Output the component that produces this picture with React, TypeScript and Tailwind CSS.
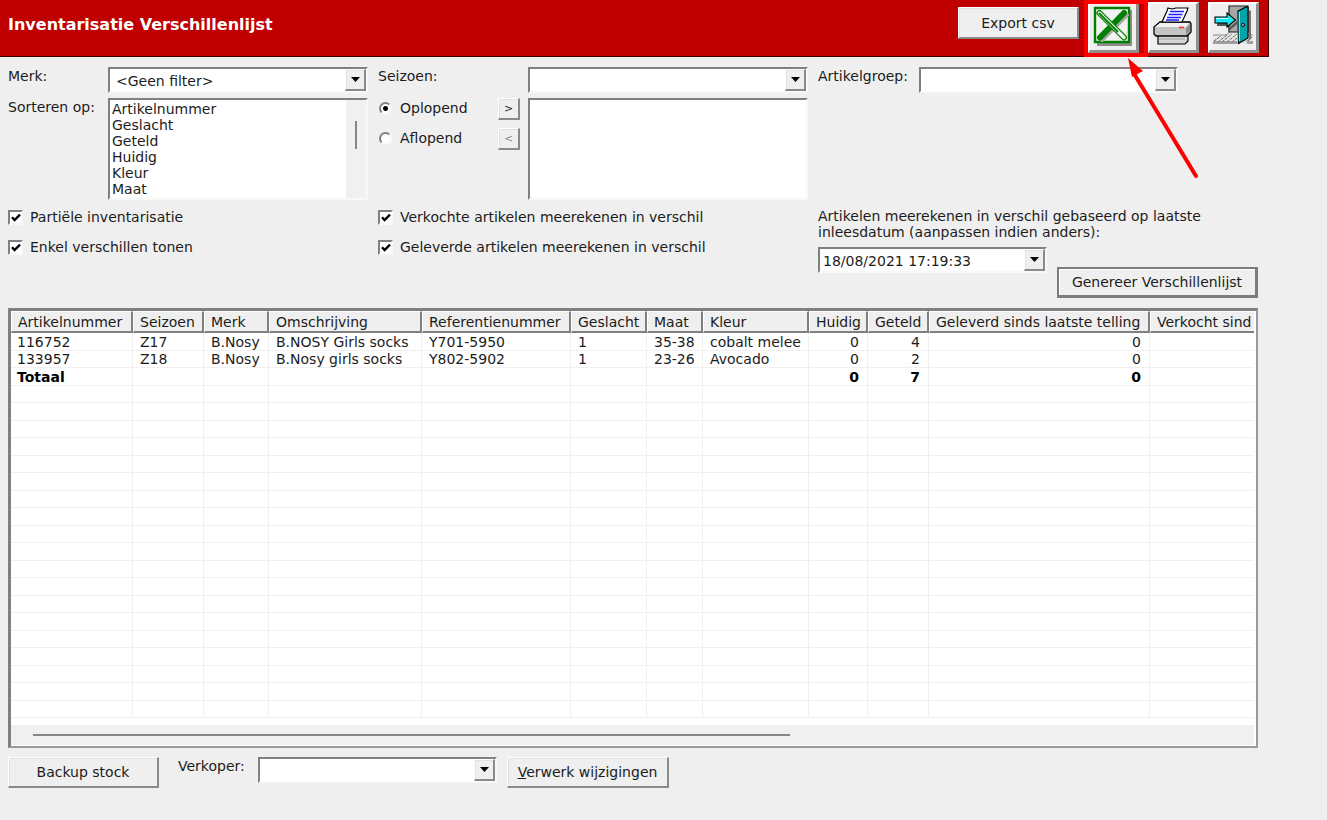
import React from "react";

const RAISED =
  "border-t border-l border-r-2 border-b-2 border-t-white border-l-white border-r-[#8a8a8a] border-b-[#8a8a8a] bg-[#efefef] shadow-[inset_1px_1px_0_#e2e2e2]";
const SUNKEN =
  "border-t-2 border-l-2 border-r-2 border-b-2 border-t-[#808080] border-l-[#808080] border-r-[#f8f8f8] border-b-[#f8f8f8] bg-white";

type DropDownProps = { id: string; options: string[]; className?: string; inset?: string };

function DropDown({ id, options, className = "", inset = "pl-1.5" }: DropDownProps) {
  return (
    <div className={`relative h-[26px] ${SUNKEN} ${className}`}>
      <select id={id} className={`block h-full w-full appearance-none bg-transparent pt-px pr-6 outline-none ${inset}`}>
        {options.map((o) => (
          <option key={o}>{o}</option>
        ))}
      </select>
      <span
        className={`pointer-events-none absolute top-0 right-0 flex h-[22px] w-[21px] items-center justify-center ${RAISED}`}
      >
        <svg width="9" height="5" viewBox="0 0 9 5" aria-hidden="true">
          <path d="M0 0h9L4.5 5z" fill="#000" />
        </svg>
      </span>
    </div>
  );
}

function Check({ label }: { label: string }) {
  return (
    <label className="flex h-[30px] items-center gap-[7px]">
      <span className="relative h-[15px] w-[15px]">
        <input type="checkbox" defaultChecked className={`peer block h-[15px] w-[15px] appearance-none ${SUNKEN}`} />
        <svg
          className="pointer-events-none absolute top-[3px] left-[3px] hidden peer-checked:block"
          width="10"
          height="10"
          viewBox="0 0 10 10"
          aria-hidden="true"
        >
          <path d="M1 4.2 3.6 7 9 1.6" fill="none" stroke="#000" strokeWidth="2.4" />
        </svg>
      </span>
      {label}
    </label>
  );
}

function Radio({ label, checked }: { label: string; checked?: boolean }) {
  return (
    <label className="flex h-5 items-center gap-2 pl-px">
      <input
        type="radio"
        name="richting"
        defaultChecked={checked}
        className="block h-[13px] w-[13px] appearance-none rounded-full border-2 border-t-[#808080] border-r-[#f8f8f8] border-b-[#f8f8f8] border-l-[#808080] bg-white checked:bg-[radial-gradient(circle,#000_2px,#fff_3px)]"
      />
      {label}
    </label>
  );
}

function ExcelIcon() {
  return (
    <svg width="44" height="44" viewBox="0 0 44 44" aria-hidden="true">
      <path d="M6 5h35v36H6z" fill="#8c8c8c" />
      <path d="M4 3h34v34H4z" fill="#f2f2f2" stroke="#008000" strokeWidth="2.4" />
      <path d="M36 10 11 35" stroke="#a8a8a8" strokeWidth="4" strokeLinecap="round" />
      <path d="M33 8 9 32.5" stroke="#008000" strokeWidth="6" strokeLinecap="round" />
      <path d="M8.5 8 33 32.5" stroke="#008000" strokeWidth="6" strokeLinecap="round" />
      <path d="M8.5 8 33 32.5" stroke="#f4f4f4" strokeWidth="3.4" strokeLinecap="round" />
      <path d="M8 8 27 27" stroke="#008000" strokeWidth="1.8" />
    </svg>
  );
}

function PrinterIcon() {
  return (
    <svg width="44" height="44" viewBox="0 0 44 44" aria-hidden="true">
      <path d="M7 29h30v7l-3 3H7z" fill="#d6d6d6" stroke="#000" strokeWidth="1.2" />
      <path d="M8 34h26" stroke="#9a9a9a" />
      <path d="m3 22 6-5h30l1 2v8l-4 4H5l-2-2z" fill="#c4c4c4" stroke="#000" strokeWidth="1.3" />
      <path d="m4 22 5-4h29l-3 4z" fill="#f1f1f1" />
      <path d="M35 23v7l4-4v-7z" fill="#8e8e8e" />
      <path d="m17 3 4 1 4-1h12l-1 3-5 11H11l5-11z" fill="#fff" stroke="#000" strokeWidth="1.2" />
      <path d="M19 6.5h14M17.5 9.5h14M16 12.5h14M15 15h13" stroke="#1d1dff" strokeWidth="1.4" />
      <path d="M28 22.5h5" stroke="#f33" strokeWidth="1.7" />
    </svg>
  );
}

function ExitIcon() {
  return (
    <svg width="44" height="44" viewBox="0 0 44 44" aria-hidden="true">
      <path d="M2 30h13l4-3h17l6 3v9H2z" fill="#e9e9e9" />
      <path d="M2 30h13l4-3M37 30h5" stroke="#888" strokeWidth="1" fill="none" />
      <path
        d="m3 36 7-5m-3 6 9-7m-5 7 10-8m-5 8 10-8m-5 8 5-4m11 3 4-4"
        stroke="#555"
        strokeWidth="1"
        strokeDasharray="3 1"
      />
      <path d="M2 36h24v3H2zM36 36h6v3h-6z" fill="#8c8c8c" opacity=".8" />
      <path d="M18 1h19v26H18z" fill="#a6a6a6" stroke="#222" strokeWidth="1.2" />
      <path d="m38 5 2 1v28l-9 4 7-4z" fill="#777" />
      <path d="m27 6 9-4.5 1 1V33l-9.500 5.500z" fill="#00a4a8" stroke="#000" strokeWidth="1.2" />
      <path d="M28.3 7v29" stroke="#5ff" strokeWidth="1.2" />
      <circle cx="32" cy="20" r="1.5" fill="#ccc" stroke="#000" />
      <path d="M6 18h12v5l8-7v3l-7 6h-2v-4H6z" fill="#555" />
      <path d="M4 12h12V8l8.500 7-8.500 7v-4H4z" fill="#19e6f0" stroke="#000" strokeWidth="1.1" />
      <path d="M5 13.5h12" stroke="#bff" />
    </svg>
  );
}

function IconButton({ label, children }: { label: string; children: React.ReactNode }) {
  return (
    <button
      type="button"
      aria-label={label}
      className="flex h-[51px] w-[51px] items-center justify-center border-t-2 border-r-3 border-b-3 border-l-2 border-t-white border-r-[#8f8f8f] border-b-[#8f8f8f] border-l-white bg-[#efefef]"
    >
      {children}
    </button>
  );
}

const columns: { name: string; width: string; num?: boolean }[] = [
  { name: "Artikelnummer", width: "w-[122px]" },
  { name: "Seizoen", width: "w-[71px]" },
  { name: "Merk", width: "w-[65px]" },
  { name: "Omschrijving", width: "w-[153px]" },
  { name: "Referentienummer", width: "w-[149px]" },
  { name: "Geslacht", width: "w-[76px]" },
  { name: "Maat", width: "w-[56px]" },
  { name: "Kleur", width: "w-[106px]" },
  { name: "Huidig", width: "w-[59px]", num: true },
  { name: "Geteld", width: "w-[61px]", num: true },
  { name: "Geleverd sinds laatste telling", width: "w-[221px]", num: true },
  { name: "Verkocht sind", width: "w-[221px]", num: true },
];

const rows: string[][] = [
  ["116752", "Z17", "B.Nosy", "B.NOSY Girls socks", "Y701-5950", "1", "35-38", "cobalt melee", "0", "4", "0", ""],
  ["133957", "Z18", "B.Nosy", "B.Nosy girls socks", "Y802-5902", "1", "23-26", "Avocado", "0", "2", "0", ""],
  ["Totaal", "", "", "", "", "", "", "", "0", "7", "0", ""],
  ...Array.from({ length: 19 }, () => Array<string>(12).fill("")),
];

const sortFields = ["Artikelnummer", "Geslacht", "Geteld", "Huidig", "Kleur", "Maat", "Merk", "Omschrijving", "Seizoen"];

export default function App() {
  return (
    <div className="min-h-screen bg-[#efefef] pr-[58px] font-['Verdana','DejaVu_Sans',sans-serif] text-[14px] leading-4 text-[#1c1c1c]">
      <header className="flex h-[57px] items-start justify-between border-r border-b border-[#3a0000] bg-[#c00000] pr-[9px] pl-2">
        <h1 className="pt-[17px] text-[16px] font-bold text-white">Inventarisatie Verschillenlijst</h1>
        <div className="flex items-start gap-[9px] pt-0.5">
          <button type="button" className={`mt-[5px] h-8 w-[121px] ${RAISED}`}>
            Export csv
          </button>
          <div className="relative">
            <IconButton label="Exporteren naar Excel">
              <ExcelIcon />
            </IconButton>
            <span className="pointer-events-none absolute -top-0.5 -left-1 h-[57px] w-[64px] border-4 border-[#ff0000]" />
            <svg
              className="pointer-events-none absolute top-[55px] left-[36px] z-10"
              width="80"
              height="124"
              viewBox="0 0 80 124"
              aria-hidden="true"
            >
              <path d="M9 15 72 119" stroke="#f00" strokeWidth="4" strokeLinecap="round" />
              <path d="m4 1 15 13L8 20z" fill="#f00" />
            </svg>
          </div>
          <IconButton label="Afdrukken">
            <PrinterIcon />
          </IconButton>
          <IconButton label="Sluiten">
            <ExitIcon />
          </IconButton>
        </div>
      </header>

      <main className="pt-2.5 pr-[11px] pl-2">
        <form className="grid grid-cols-[360fr_430fr_440fr] gap-x-2.5" onSubmit={(e) => e.preventDefault()}>
          <div className="flex flex-col">
            <div className="flex">
              <label htmlFor="merk" className="w-[100px] pt-px">
                Merk:
              </label>
              <DropDown id="merk" options={["<Geen filter>"]} className="flex-1" />
            </div>
            <div className="mt-[5px] flex">
              <label htmlFor="sorteren" className="w-[100px] pt-px">
                Sorteren op:
              </label>
              <div className={`flex h-[102px] flex-1 ${SUNKEN}`}>
                <select
                  id="sorteren"
                  size={6}
                  className="h-[98px] flex-1 appearance-none overflow-y-auto bg-white pt-px outline-none [scrollbar-width:none]"
                >
                  {sortFields.map((f) => (
                    <option key={f} className="h-4 min-h-4 p-0 pl-0.5 leading-4">
                      {f}
                    </option>
                  ))}
                </select>
                <div className="flex w-5 justify-center bg-[#f0f0f0] pt-[21px]">
                  <span className="h-7 w-0.5 bg-[#868686]" />
                </div>
              </div>
            </div>
            <div className="mt-0.5">
              <Check label="Partiële inventarisatie" />
              <Check label="Enkel verschillen tonen" />
            </div>
          </div>

          <div className="flex flex-col">
            <div className="flex">
              <label htmlFor="seizoen" className="w-[150px] pt-px">
                Seizoen:
              </label>
              <DropDown id="seizoen" options={[""]} className="flex-1" />
            </div>
            <div className="mt-[5px] flex">
              <div className="flex w-[150px] justify-between pr-2">
                <div className="flex flex-col gap-2.5">
                  <Radio label="Oplopend" checked />
                  <Radio label="Aflopend" />
                </div>
                <div className="flex flex-col gap-2">
                  <button type="button" aria-label="Toevoegen" className={`h-[22px] w-[22px] text-[11px] ${RAISED}`}>
                    &gt;
                  </button>
                  <button
                    type="button"
                    disabled
                    aria-label="Verwijderen"
                    className={`h-[22px] w-[22px] text-[11px] text-[#8c8c8c] ${RAISED}`}
                  >
                    &lt;
                  </button>
                </div>
              </div>
              <select
                size={6}
                aria-label="Gekozen sortering"
                className={`h-[102px] flex-1 appearance-none outline-none ${SUNKEN}`}
              />
            </div>
            <div className="mt-0.5">
              <Check label="Verkochte artikelen meerekenen in verschil" />
              <Check label="Geleverde artikelen meerekenen in verschil" />
            </div>
          </div>

          <div className="flex flex-col">
            <div className="flex">
              <label htmlFor="artikelgroep" className="w-[101px] pt-px">
                Artikelgroep:
              </label>
              <DropDown id="artikelgroep" options={[""]} className="mr-20 flex-1" />
            </div>
            <label htmlFor="datum" className="mt-[115px] max-w-[410px]">
              Artikelen meerekenen in verschil gebaseerd op laatste inleesdatum (aanpassen indien anders):
            </label>
            <div className="mt-[7px] flex items-start gap-2.5">
              <DropDown id="datum" options={["18/08/2021 17:19:33"]} className="flex-1" inset="pl-[3px]" />
              <button
                type="submit"
                className="mt-5 h-[31px] w-[201px] border-t-2 border-r-3 border-b-3 border-l-2 border-[#7c7c7c] bg-[#efefef] whitespace-nowrap shadow-[inset_1px_1px_0_#fff]"
              >
                Genereer Verschillenlijst
              </button>
            </div>
          </div>
        </form>

        <section className="mt-2.5 border-t-3 border-r-2 border-b-2 border-l-3 border-t-[#808080] border-r-[#9a9a9a] border-b-[#9a9a9a] border-l-[#808080] bg-white">
          <div className="mr-[2px] h-[414px] overflow-x-auto overflow-y-hidden [scrollbar-width:none]">
            <table className="w-[1360px] table-fixed border-separate border-spacing-0">
              <thead>
                <tr className="h-[22px]">
                  {columns.map((c) => (
                    <th
                      key={c.name}
                      className={`border-t border-r-2 border-b-2 border-l border-t-white border-r-[#808080] border-b-[#808080] border-l-white bg-[#efefef] p-0 pl-1.5 text-left font-normal whitespace-nowrap ${c.width}`}
                    >
                      {c.name}
                    </th>
                  ))}
                </tr>
              </thead>
              <tbody>
                {rows.map((r, i) => (
                  <tr key={i} className={`odd:h-[18px] even:h-[17px] ${i === 2 ? "font-bold text-black" : ""}`}>
                    {r.map((v, j) => (
                      <td
                        key={j}
                        className={`border-r border-b border-[#f0f0f0] p-0 whitespace-nowrap ${
                          columns[j].num ? "pr-2 text-right" : j === 0 ? "pl-1.5" : "pl-[7px]"
                        }`}
                      >
                        {v}
                      </td>
                    ))}
                  </tr>
                ))}
              </tbody>
            </table>
          </div>
          <div className="mr-[2px] mb-px h-5 bg-[#f0f0f0] pt-[9px] pl-[22px]">
            <div className="h-0.5 w-[62%] bg-[#868686]" />
          </div>
        </section>

        <footer className="mt-[9px] flex items-start">
          <button type="button" className={`h-[31px] w-[151px] ${RAISED}`}>
            Backup stock
          </button>
          <label htmlFor="verkoper" className="ml-[19px] w-20 pt-px">
            Verkoper:
          </label>
          <DropDown id="verkoper" options={[""]} className="w-[239px]" />
          <button type="button" className={`ml-2.5 h-[31px] w-[162px] ${RAISED}`}>
            <span className="underline">V</span>erwerk wijzigingen
          </button>
        </footer>
      </main>
    </div>
  );
}
